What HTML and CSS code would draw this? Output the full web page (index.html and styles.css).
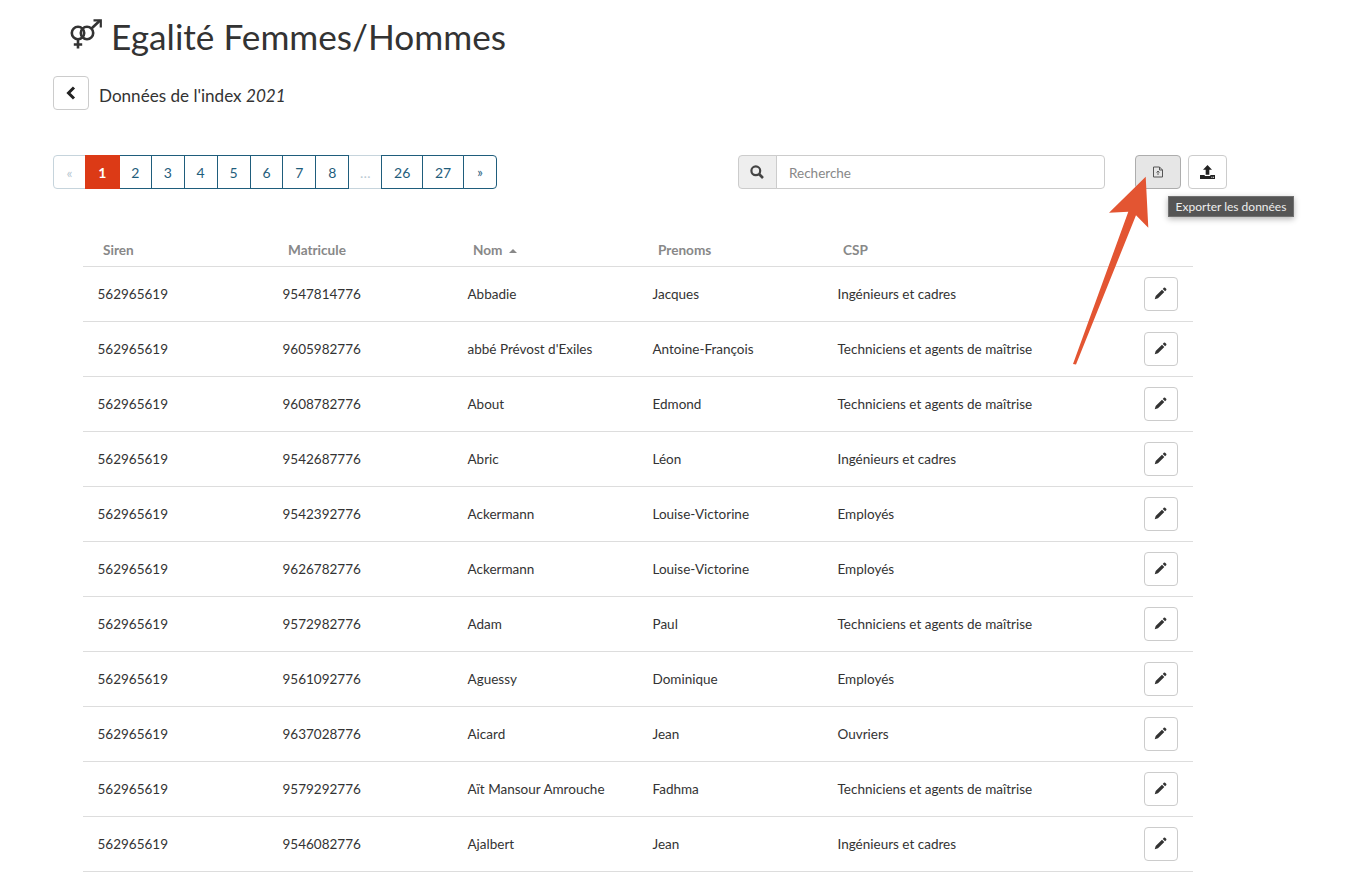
FILE: index.html
```html
<!DOCTYPE html>
<html lang="fr">
<head>
<meta charset="utf-8">
<title>Egalité Femmes/Hommes</title>
<link rel="stylesheet" href="styles.css">
</head>
<body>
<main class="page">
  <h1 class="title">
    <svg class="title-icon" viewBox="0 0 32 30" width="32" height="30" fill="none" stroke="#333" stroke-width="2.6">
      <circle cx="8" cy="14" r="6.2"/>
      <circle cx="17" cy="14" r="6.2"/>
      <path d="M8 20v9.5M3.8 25.5h8.4M21.5 9.5L30 1.5"/>
      <path d="M23.5 1.3h7.3v7.3" stroke-width="2.2"/>
    </svg>
    <span>Egalité Femmes/Hommes</span>
  </h1>
  <div class="subhead">
    <a class="btn back">
      <svg viewBox="0 0 12 14" width="12" height="14" fill="none" stroke="#222" stroke-width="3"><path d="M9 1.5L3.5 7L9 12.5"/></svg>
    </a>
    <h2 class="subtitle">Données de l'index <em>2021</em></h2>
  </div>
  <div class="toolbar">
    <nav class="pagination">
      <a class="pg off first">«</a><a class="pg current">1</a><a class="pg w33">2</a><a class="pg">3</a><a class="pg">4</a><a class="pg">5</a><a class="pg">6</a><a class="pg">7</a><a class="pg">8</a><a class="pg off">…</a><a class="pg w42">26</a><a class="pg w42">27</a><a class="pg last">»</a>
    </nav>
    <div class="search">
      <span class="addon">
        <svg viewBox="0 0 14 14" width="14" height="14" fill="none" stroke="#444" stroke-width="2.2"><circle cx="5.8" cy="5.8" r="4.4"/><path d="M9 9l4 4" stroke-width="2.6"/></svg>
      </span>
      <span class="input">Recherche</span>
    </div>
    <a class="btn export">
      <svg viewBox="0 0 12 12" width="12" height="12" fill="none" stroke="#555" stroke-width="1"><path d="M1.5 1h6l3 3v7h-9zM7.5 1v3h3"/><path d="M6 9V5M4.5 6.5L6 5l1.5 1.5" stroke-width=".9"/></svg>
    </a>
    <a class="btn upload">
      <svg viewBox="0 0 14 13" width="15" height="14"><path fill="#222" d="M7 0l4.2 4.4H8.7V9H5.3V4.4H2.8zM0 9.4h4.4v.8h5.2v-.8H14V13H0z"/><path fill="#fff" d="M10.6 11h.9v.8h-.9zM12.1 11h.9v.8h-.9z"/></svg>
    </a>
  </div>
  <table class="data">
    <thead>
      <tr><th>Siren</th><th>Matricule</th><th>Nom <i class="sort"></i></th><th>Prenoms</th><th>CSP</th><th></th></tr>
    </thead>
    <tbody>
      <tr><td>562965619</td><td>9547814776</td><td>Abbadie</td><td>Jacques</td><td>Ingénieurs et cadres</td><td class="act"><a class="btn edit"><svg class="pen" viewBox="0 0 14 14"><path d="M10.6.9a1 1 0 0 1 1.4 0l1.1 1.1a1 1 0 0 1 0 1.4l-1.2 1.2-2.5-2.5zM8.6 2.9l2.5 2.5-6.8 6.8-3.5 1 1-3.5z"/></svg></a></td></tr>
      <tr><td>562965619</td><td>9605982776</td><td>abbé Prévost d'Exiles</td><td>Antoine-François</td><td>Techniciens et agents de maîtrise</td><td class="act"><a class="btn edit"><svg class="pen" viewBox="0 0 14 14"><path d="M10.6.9a1 1 0 0 1 1.4 0l1.1 1.1a1 1 0 0 1 0 1.4l-1.2 1.2-2.5-2.5zM8.6 2.9l2.5 2.5-6.8 6.8-3.5 1 1-3.5z"/></svg></a></td></tr>
      <tr><td>562965619</td><td>9608782776</td><td>About</td><td>Edmond</td><td>Techniciens et agents de maîtrise</td><td class="act"><a class="btn edit"><svg class="pen" viewBox="0 0 14 14"><path d="M10.6.9a1 1 0 0 1 1.4 0l1.1 1.1a1 1 0 0 1 0 1.4l-1.2 1.2-2.5-2.5zM8.6 2.9l2.5 2.5-6.8 6.8-3.5 1 1-3.5z"/></svg></a></td></tr>
      <tr><td>562965619</td><td>9542687776</td><td>Abric</td><td>Léon</td><td>Ingénieurs et cadres</td><td class="act"><a class="btn edit"><svg class="pen" viewBox="0 0 14 14"><path d="M10.6.9a1 1 0 0 1 1.4 0l1.1 1.1a1 1 0 0 1 0 1.4l-1.2 1.2-2.5-2.5zM8.6 2.9l2.5 2.5-6.8 6.8-3.5 1 1-3.5z"/></svg></a></td></tr>
      <tr><td>562965619</td><td>9542392776</td><td>Ackermann</td><td>Louise-Victorine</td><td>Employés</td><td class="act"><a class="btn edit"><svg class="pen" viewBox="0 0 14 14"><path d="M10.6.9a1 1 0 0 1 1.4 0l1.1 1.1a1 1 0 0 1 0 1.4l-1.2 1.2-2.5-2.5zM8.6 2.9l2.5 2.5-6.8 6.8-3.5 1 1-3.5z"/></svg></a></td></tr>
      <tr><td>562965619</td><td>9626782776</td><td>Ackermann</td><td>Louise-Victorine</td><td>Employés</td><td class="act"><a class="btn edit"><svg class="pen" viewBox="0 0 14 14"><path d="M10.6.9a1 1 0 0 1 1.4 0l1.1 1.1a1 1 0 0 1 0 1.4l-1.2 1.2-2.5-2.5zM8.6 2.9l2.5 2.5-6.8 6.8-3.5 1 1-3.5z"/></svg></a></td></tr>
      <tr><td>562965619</td><td>9572982776</td><td>Adam</td><td>Paul</td><td>Techniciens et agents de maîtrise</td><td class="act"><a class="btn edit"><svg class="pen" viewBox="0 0 14 14"><path d="M10.6.9a1 1 0 0 1 1.4 0l1.1 1.1a1 1 0 0 1 0 1.4l-1.2 1.2-2.5-2.5zM8.6 2.9l2.5 2.5-6.8 6.8-3.5 1 1-3.5z"/></svg></a></td></tr>
      <tr><td>562965619</td><td>9561092776</td><td>Aguessy</td><td>Dominique</td><td>Employés</td><td class="act"><a class="btn edit"><svg class="pen" viewBox="0 0 14 14"><path d="M10.6.9a1 1 0 0 1 1.4 0l1.1 1.1a1 1 0 0 1 0 1.4l-1.2 1.2-2.5-2.5zM8.6 2.9l2.5 2.5-6.8 6.8-3.5 1 1-3.5z"/></svg></a></td></tr>
      <tr><td>562965619</td><td>9637028776</td><td>Aicard</td><td>Jean</td><td>Ouvriers</td><td class="act"><a class="btn edit"><svg class="pen" viewBox="0 0 14 14"><path d="M10.6.9a1 1 0 0 1 1.4 0l1.1 1.1a1 1 0 0 1 0 1.4l-1.2 1.2-2.5-2.5zM8.6 2.9l2.5 2.5-6.8 6.8-3.5 1 1-3.5z"/></svg></a></td></tr>
      <tr><td>562965619</td><td>9579292776</td><td>Aït Mansour Amrouche</td><td>Fadhma</td><td>Techniciens et agents de maîtrise</td><td class="act"><a class="btn edit"><svg class="pen" viewBox="0 0 14 14"><path d="M10.6.9a1 1 0 0 1 1.4 0l1.1 1.1a1 1 0 0 1 0 1.4l-1.2 1.2-2.5-2.5zM8.6 2.9l2.5 2.5-6.8 6.8-3.5 1 1-3.5z"/></svg></a></td></tr>
      <tr><td>562965619</td><td>9546082776</td><td>Ajalbert</td><td>Jean</td><td>Ingénieurs et cadres</td><td class="act"><a class="btn edit"><svg class="pen" viewBox="0 0 14 14"><path d="M10.6.9a1 1 0 0 1 1.4 0l1.1 1.1a1 1 0 0 1 0 1.4l-1.2 1.2-2.5-2.5zM8.6 2.9l2.5 2.5-6.8 6.8-3.5 1 1-3.5z"/></svg></a></td></tr>
    </tbody>
  </table>
</main>
<div class="tooltip">Exporter les données</div>
<svg class="arrow" viewBox="0 0 90 200" width="90" height="200"><path fill="#e35532" d="M74.7 0.7L38 36.7L57.3 35.7L2 188L5 188.4L65 39.3L77.3 51.7z"/></svg>
</body>
</html>
```
FILE: styles.css
```css
* { box-sizing: border-box; }
html, body { margin: 0; padding: 0; }
body {
  background: #fff;
  color: #333;
  font-family: "Lato", "Liberation Sans", sans-serif;
  font-size: 13.5px;
  height: 874px;
  overflow: hidden;
  position: relative;
}
.page { padding: 0 0 0 53px; }
.title {
  display: flex;
  align-items: center;
  gap: 9px;
  margin: 0 0 0 17px;
  height: 72px;
  font-size: 35.2px;
  font-weight: 400;
  color: #333;
}
.title-icon { flex: none; margin-top: -4px; }
.subhead { display: flex; align-items: center; gap: 10px; margin-top: 4px; height: 34px; }
.subtitle { margin: 0; padding-top: 5px; font-size: 17.1px; font-weight: 400; color: #333; }
.btn {
  display: inline-flex;
  align-items: center;
  justify-content: center;
  height: 34px;
  background: #fff;
  border: 1px solid #ccc;
  border-radius: 4px;
}
.back { width: 36px; }
.toolbar { display: flex; align-items: flex-start; margin-top: 45px; height: 34px; }
.pagination { display: flex; width: 444px; }
.pg {
  display: flex;
  align-items: center;
  justify-content: center;
  width: 34px;
  height: 34px;
  color: #1f5d7c;
  border: 1px solid #1f5d7c;
  margin-left: -1px;
  background: #fff;
  font-size: 14px;
  position: relative;
  z-index: 1;
}
.pg.first { margin-left: 0; width: 33px; border-radius: 4px 0 0 4px; }
.pg.last { border-radius: 0 4px 4px 0; width: 34px; font-size: 13px; }
.pg.w33 { width: 33px; }
.pg.w42 { width: 42px; }
.pg.off { color: #b9c9d3; border-color: #c6d4dc; z-index: 0; }
.pg.current { background: #dc3a16; border-color: #dc3a16; color: #fff; font-weight: 700; width: 35px; z-index: 2; }
.search { display: flex; width: 367px; height: 34px; margin-left: 241px; }
.addon {
  display: flex;
  align-items: center;
  justify-content: center;
  width: 39px;
  padding-right: 1px;
  background: #eee;
  border: 1px solid #ccc;
  border-radius: 4px 0 0 4px;
}
.input {
  flex: 1;
  display: flex;
  align-items: center;
  padding: 2px 0 0 12px;
  margin-left: -1px;
  color: #888;
  border: 1px solid #ccc;
  border-radius: 0 4px 4px 0;
}
.export { width: 46px; margin-left: 30px; background: #e6e6e6; border-color: #adadad; }
.upload { width: 39px; margin-left: 7px; }
.data {
  border-collapse: collapse;
  table-layout: fixed;
  width: 1110px;
  margin: 43px 0 0 30px;
}
.data th {
  width: 185px;
  height: 34px;
  padding: 2px 0 0 20px;
  text-align: left;
  font-size: 13.6px;
  font-weight: 700;
  color: #888;
  border-bottom: 1px solid #ddd;
}
.data td {
  height: 55px;
  padding: 0 0 0 14.5px;
  border-bottom: 1px solid #ddd;
  color: #333;
  white-space: nowrap;
}
.data td.act { padding: 0 15px 0 0; text-align: right; }
.sort {
  display: inline-block;
  width: 0; height: 0;
  margin: 0 0 2px 3px;
  border-left: 4.5px solid transparent;
  border-right: 4.5px solid transparent;
  border-bottom: 4.5px solid #888;
}
.edit { width: 34px; vertical-align: middle; }
.pen { width: 13px; height: 13px; fill: #333; margin-right: 2px; }
.tooltip {
  position: absolute;
  left: 1168px;
  top: 196px;
  width: 126px;
  height: 21px;
  display: flex;
  align-items: center;
  justify-content: center;
  background: #555;
  color: #eee;
  font-size: 12px;
  border: 1px solid #707070;
  box-shadow: 0 2px 6px rgba(0,0,0,.3);
}
.arrow { position: absolute; left: 1071px; top: 176px; }
```
